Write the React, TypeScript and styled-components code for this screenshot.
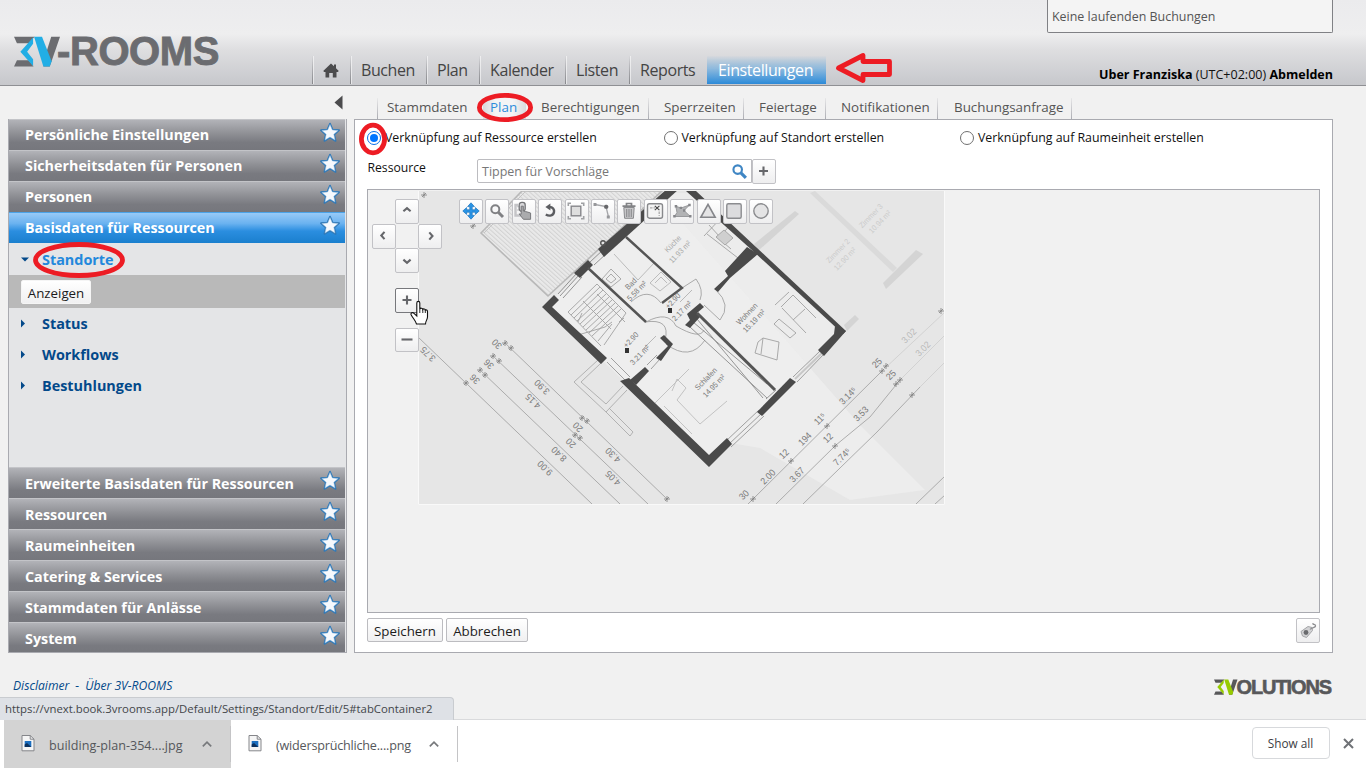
import React from "react";
import styled, { createGlobalStyle, css } from "styled-components";

const GlobalStyle = createGlobalStyle`
  * { box-sizing: border-box; }
  html, body { margin: 0; padding: 0; }
  body {
    width: 1366px; height: 768px; overflow: hidden; background: #f1f1f1;
    font-family: "Open Sans", "Noto Sans", sans-serif; font-size: 12.3px; color: #1c1c1c;
  }
  button { font-family: inherit; }
`;

const Page = styled.div`
  position: relative; width: 1366px; height: 768px; display: flex; flex-direction: column; background: #f1f1f1;
`;

/* ---------- header ---------- */
const Header = styled.header`
  height: 86px; flex: none; display: flex; align-items: stretch; border-bottom: 1px solid #8f9094;
  background: linear-gradient(#ebebed 0, #eeeeef 34px, #dedee0 50px, #cbccd0 78px, #c7c8cc 85px);
`;
const Logo = styled.div`
  width: 312px; padding: 36px 0 0 14px; display: flex; align-items: flex-start;
`;
const LogoText = styled.span`
  font-family: "Liberation Sans", sans-serif; font-weight: 700; font-size: 40px; line-height: 31px;
  letter-spacing: -0.4px; color: #6b6c70; margin-left: -4px; white-space: nowrap; -webkit-text-stroke: 0.9px #6b6c70;
`;
const Nav = styled.nav`
  display: flex; align-items: flex-end; height: 84px; flex: none;
`;
const NavItem = styled.a<{ $w: number; $active?: boolean }>`
  width: ${p => p.$w}px; height: 28px; padding: 1px 0 0 10px; display: flex; align-items: center;
  font-size: 16px; letter-spacing: -0.4px; line-height: 27px; color: #444; white-space: nowrap;
  border-left: 1px solid; border-image: linear-gradient(rgba(130,131,135,0), #85868a) 1;
  box-shadow: inset 1px 0 0 rgba(255,255,255,.55);
  ${p => p.$active && css`
    color: #fff; background: linear-gradient(rgba(200,210,220,.2), #8db9dd 45%, #3a92da 92%, #2d89d6);
    border-image: none; border-color: transparent; box-shadow: none;
  `}
`;
const HeaderRight = styled.div`
  flex: 1; padding-right: 33px; display: flex; flex-direction: column; align-items: flex-end; justify-content: space-between;
`;
const Bookings = styled.div`
  width: 286px; height: 33px; border: 1px solid #808185; border-top: 0; border-radius: 0 0 2px 2px; background: #f4f4f4;
  padding-left: 4px; line-height: 33px; color: #555; font-size: 12.45px;
`;
const UserLine = styled.div`
  color: #111; line-height: 18px; margin-bottom: 1px; white-space: nowrap; font-size: 12.52px;
  b { color: #000; font-weight: 700; }
`;

/* ---------- body ---------- */
const Body = styled.div`
  display: flex; padding: 0 33px 0 8px; height: 567px; flex: none;
`;
const Left = styled.div`
  width: 339px; margin-right: 7px; display: flex; flex-direction: column; flex: none;
`;
const Collapse = styled.div`
  height: 33px; display: flex; justify-content: flex-end; padding: 8.5px 4.5px 0 0;
`;
const Accordion = styled.div`
  height: 534px; border: 1px solid #a9aab0; border-width: 0 1px 1px; padding-right: 1px; background: #e4e5e7; overflow: hidden;
`;
const AccHead = styled.div<{ $active?: boolean; $drop?: boolean }>`
  height: 31px; display: flex; align-items: center; justify-content: space-between; padding: 0 4px 0 16px;
  color: #fff; font-weight: 700; font-size: 14.32px; line-height: 30px; white-space: nowrap;
  border-top: 1px solid ${p => (p.$active ? "#4ba3e8" : "#c3c4c8")};
  background: ${p => (p.$active
    ? "linear-gradient(#98caf7, #6ab2f0 35%, #2b8ee0 60%, #1a7fce)"
    : "linear-gradient(#b2b3b8, #8f9095 45%, #797a80 75%, #76777d)")};
  span { padding-top: ${p => (p.$drop ? 2 : 0)}px; }
  svg { margin-top: ${p => (p.$drop ? -5 : -6)}px; }
`;
const AccBody = styled.div`
  height: 224px; background: #e4e5e7;
`;
const TreeItem = styled.div<{ $active?: boolean }>`
  height: ${p => (p.$active ? 32 : 31)}px; display: flex; align-items: center; padding: ${p => (p.$active ? 1 : 0)}px 0 0 12px;
  font-weight: 700; font-size: 14.4px; color: ${p => (p.$active ? "#2288dc" : "#03498a")};
  svg { width: 9px; height: 9px; margin-right: 12px; }
`;
const SubBand = styled.div`
  height: 33px; background: #b9b9b9; display: flex; align-items: center; padding: 1px 0 0 12px;
`;
const Button = styled.button<{ $w: number; $plain?: boolean }>`
  width: ${p => p.$w}px; height: 24px; padding: 1px 0 0; border: 1px solid ${p => (p.$plain ? "#f5f5f5" : "#bcbcc0")}; border-radius: 2px;
  background: linear-gradient(#fff, #f0f0f1); color: #1c1c1c; font-size: 13.3px; line-height: 20px;
  display: flex; align-items: center; justify-content: center; white-space: nowrap;
`;

const Right = styled.div`
  width: 979px; display: flex; flex-direction: column; flex: none;
`;
const Tabs = styled.div`
  height: 33px; padding: 12px 0 0 23px; display: flex;
`;
const Tab = styled.div<{ $w: number; $pad: number; $line?: boolean; $active?: boolean }>`
  width: ${p => p.$w}px; height: 21px; padding-left: ${p => p.$pad}px; line-height: 18px; white-space: nowrap;
  font-size: 13.4px; color: ${p => (p.$active ? "#2d8cdb" : "#555")};
  border-right: 1px solid;
  border-image: ${p => (p.$line ? "linear-gradient(rgba(169,170,176,.1), #a9aab0)" : "linear-gradient(transparent, transparent)")} 1;
  ${p => p.$active && css`background: linear-gradient(90deg, #d9d9db, #f4f4f5 30%, #f4f4f5 70%, #dcdcde);`}
`;
const TabStart = styled.div`
  width: 1px; height: 21px; background: linear-gradient(rgba(169,170,176,.1), #a9aab0);
`;
const Panel = styled.div`
  height: 534px; background: #fff; border: 1px solid #a9aab0; padding: 0 12px;
`;
const Radios = styled.div`
  display: grid; grid-template-columns: 296.5px 296.5px 1fr; height: 36px; align-items: center;
`;
const RadioLabel = styled.label`
  display: flex; align-items: center; font-size: 12.35px; line-height: 16px; color: #111; white-space: nowrap; gap: 4px;
`;
const RadioText = styled.span`
  padding-bottom: 1px;
`;
const RadioDot = styled.span<{ $on?: boolean }>`
  width: 14px; height: 14px; border-radius: 50%; background: #fff; border: 1px solid ${p => (p.$on ? "#0a6fe8" : "#707070")};
  display: flex; align-items: center; justify-content: center;
  &::after { content: ""; width: 8px; height: 8px; border-radius: 50%; background: ${p => (p.$on ? "#0075ff" : "transparent")}; }
`;
const Resource = styled.div`
  display: flex; height: 33px; padding-top: 3px; align-items: flex-start;
`;
const ResourceLabel = styled.div`
  width: 110px; padding-left: .5px; line-height: 18px; color: #111; font-size: 12.2px;
`;
const Search = styled.div`
  width: 275px; height: 24px; border: 1px solid #bcbcc0; background: #fff; border-radius: 2px 0 0 2px;
  display: flex; align-items: center; justify-content: space-between; padding: 1px 3px 0 4px; color: #777; font-size: 12.5px; line-height: 22px;
`;
const IconButton = styled.button<{ $hot?: boolean }>`
  width: 24px; height: 24.5px; flex: none; padding: 0 1px 0 0; border: 1px solid ${p => (p.$hot ? "#77787c" : "#c2c2c6")}; border-radius: 2px;
  background: linear-gradient(#fff, #eeeeef); display: flex; align-items: center; justify-content: center;
  svg { display: block; flex: none; }
`;
const Canvas = styled.div`
  position: relative; height: 424px; border: 1px solid #a9aab0; background: #f1f1f1; overflow: hidden;
`;
const PlanSvg = styled.svg`
  position: absolute; left: 50px; top: 1px; display: block;
`;
const PadGrid = styled.div`
  position: absolute; left: 4px; top: 9px; display: grid; grid-template-columns: 23px 23px 24px; grid-template-rows: 25px 24px 24px;
`;
const PadHub = styled.div`
  grid-column: 2; grid-row: 2; background: #f1f1f1;
`;
const PadCell = styled.div<{ $c: number; $r: number }>`
  grid-column: ${p => p.$c}; grid-row: ${p => p.$r};
`;
const ZoomButtons = styled.div`
  position: absolute; left: 27px; top: 98px; display: flex; flex-direction: column; gap: 15px;
`;
const Toolbar = styled.div`
  position: absolute; left: 91px; top: 9px; display: flex; gap: 2.4px;
`;
const Actions = styled.div`
  display: flex; gap: 3px; padding-top: 5px;
`;
const Spacer = styled.div`flex: 1;`;

/* ---------- footer ---------- */
const Footer = styled.footer`
  height: 66px; flex: none; display: flex; justify-content: space-between; align-items: flex-start; padding: 24px 35px 0 13px;
`;
const FooterLinks = styled.div`
  font-style: italic; font-size: 12.15px; line-height: 18px; color: #04498a; display: flex; gap: 6px; white-space: nowrap;
`;
const Volutions = styled.div`
  display: flex; align-items: flex-start; padding-top: 2px;
  span {
    font-family: "Liberation Sans", sans-serif; font-weight: 700; font-size: 20px; line-height: 17px; letter-spacing: -1.1px;
    color: #58585a; margin: 0 0 0 -2px; -webkit-text-stroke: 0.6px #58585a;
  }
`;
const StatusBar = styled.div`
  position: absolute; left: 0; top: 697px; width: 454px; height: 23px; background: #dee1e6; border: 1px solid #c9ccd0; border-left: 0; border-bottom: 0;
  border-top-right-radius: 4px; padding-left: 5px; font-size: 11.36px; line-height: 22px; color: #43464a; white-space: nowrap;
`;
const Downloads = styled.div`
  height: 49px; flex: none; background: #fff; border-top: 1px solid #d9dadc; display: flex; align-items: flex-start; padding-left: 4px;
`;
const Download = styled.div<{ $hot?: boolean }>`
  width: 227px; height: 48px; display: flex; align-items: center; padding: 0 18px 0 17px; background: ${p => (p.$hot ? "#d3d3d3" : "#fff")};
  position: relative; color: #55575b; white-space: nowrap;
  &::after { content: ""; position: absolute; right: 0; top: 6px; width: 1px; height: 36px; background: #c4c4c6; }
`;
const FileName = styled.span<{ $track?: number }>`
  flex: 1; margin-left: 14px; padding-top: 2px; font-size: 12.6px; letter-spacing: ${p => p.$track ?? 0}px;
`;
const ShowAll = styled.button`
  width: 78px; height: 32px; margin: 7px 13px 0 0; border: 1px solid #d7d9dc; border-radius: 4px; background: #fff;
  font-size: 11.8px; font-weight: 500; color: #3c4043; padding: 0 0 1px;
`;
const CloseIcon = styled.svg`
  margin: 17.5px 12.5px 0 0;
`;
const Overlay = styled.svg`
  position: absolute; left: 0; top: 0; pointer-events: none;
`;

const LogoMark = ({ w, h, dark, bright }: { w: number; h: number; dark: string; bright: string }) => (
  <svg width={w} height={h} viewBox="0 0 48 30" preserveAspectRatio="none">
    <path d="M0 .8H21L15 7H3ZM0 29.5 3 23.5H15L20 29.5Z" fill={dark} />
    <path d="M38 .8H47L36.5 29.5H30L33 16Z" fill={dark} />
    <path d="M19.5 1.5V7.6L13.4 15.2 19.5 22.5V29L6.5 15.2Z" fill={bright} />
    <path d="M20.5 .8H28.6L38.4 24.5 36.5 29.5H30Z" fill={bright} />
  </svg>
);

const STAR = "M11 1.6 13.6 7.6 20.1 8.2 15.2 12.5 16.6 18.9 11 15.5 5.4 18.9 6.8 12.5 1.9 8.2 8.4 7.6Z";
const Star = () => (
  <svg width="22" height="21" viewBox="0 0 22 21">
    <path d={STAR} fill="#2f78b7" stroke="#2f78b7" strokeWidth="1.7" strokeLinejoin="round" />
    <path d={STAR} fill="#f6f9fd" stroke="#8fbbe0" strokeWidth=".5" transform="translate(1.1 1.1) scale(.9)" />
  </svg>
);

const Head = ({ label, active, drop }: { label: string; active?: boolean; drop?: boolean }) => (
  <AccHead $active={active} $drop={drop}><span>{label}</span><Star /></AccHead>
);

const Chevron = ({ d }: { d: string }) => (
  <svg width="12" height="12" viewBox="0 0 12 12"><path d={d} fill="none" stroke="#66676b" strokeWidth="2.1" /></svg>
);
const Magnifier = ({ c, size }: { c: string; size: number }) => (
  <svg width={size} height={size} viewBox="0 0 16 16" fill="none" stroke={c}>
    <circle cx="6.3" cy="6.2" r="4" strokeWidth="2" /><path d="M9.3 9.3 14 14" strokeWidth="3" />
  </svg>
);

const icons: React.ReactNode[] = [
  <svg width="18" height="18" viewBox="0 0 18 18" key="move"><path d="M9 .8 12.4 4.6H10.2V7.8H13.4V5.6L17.2 9 13.4 12.4V10.2H10.2V13.4H12.4L9 17.2 5.6 13.4H7.8V10.2H4.6V12.4L.8 9 4.6 5.6V7.8H7.8V4.6H5.6Z" fill="#2994e6" stroke="#1b74bd" strokeWidth=".7" /></svg>,
  <Magnifier c="#808184" size={16} key="zoom" />,
  <svg width="20" height="20" viewBox="0 0 20 20" key="pick"><path d="M5 4H2.5V14.5H8" fill="none" stroke="#c4c4c7" strokeWidth="2.4" /><path d="M4 5.5H7M4 9H8" stroke="#cfcfd1" strokeWidth="1.6" /><rect x="6.2" y="1.3" width="6" height="9" rx="2.6" fill="#d8d8da" stroke="#737477" strokeWidth="1.3" /><path d="M8.2 5.2H10.3V10L12.6 10.6 15 11.2 17.6 12V18.3H10.4L6.2 12.9 8.2 13.2Z" fill="#aaabad" stroke="#77787b" /></svg>,
  <svg width="16" height="16" viewBox="0 0 16 16" key="turn"><path d="M7.5 4C10.8 4 12.4 6.4 12 9 11.5 12.3 7.6 13.8 3.8 11.4" fill="none" stroke="#5c5d61" strokeWidth="2.4" /><path d="M8.4 .6V7.4L3.4 4Z" fill="#5c5d61" /></svg>,
  <svg width="18" height="18" viewBox="0 0 18 18" key="fit"><rect x="4.2" y="4.2" width="9.6" height="9.6" fill="#dedede" stroke="#85868a" strokeWidth="1.4" /><path d="M1.3 4V1.3H4M14 1.3H16.7V4M16.7 14V16.7H14M4 16.7H1.3V14" fill="none" stroke="#a0a1a4" strokeWidth="1.6" /></svg>,
  <svg width="18" height="18" viewBox="0 0 18 18" key="line"><path d="M2 2.5 13 4.5 15.5 15" fill="none" stroke="#a5a6a9" strokeWidth="1.3" /><rect x=".5" y="1" width="3" height="3" fill="#97989b" /><rect x="11.2" y="2.8" width="4" height="4" rx="1.5" fill="#66676a" /><rect x="13.8" y="13.5" width="3" height="3" fill="#97989b" /></svg>,
  <svg width="16" height="18" viewBox="0 0 16 18" key="trash"><path d="M2.8 5.5H13.2L12.4 16.3H3.6Z" fill="#c6c6c8" stroke="#8a8b8e" /><path d="M5.7 7V15M8 7V15M10.3 7V15" stroke="#8a8b8e" strokeWidth="1.1" /><path d="M1.5 4.2H14.5M5.5 3.5V1.5H10.5V3.5" fill="none" stroke="#828386" strokeWidth="1.7" /></svg>,
  <svg width="18" height="18" viewBox="0 0 18 18" key="node"><rect x="1.5" y="1.8" width="15" height="14.4" rx="2" fill="#f4f4f4" stroke="#88898c" strokeWidth="1.4" /><path d="M4 5.8H9M13.2 9.5V14" stroke="#aaa" strokeWidth="1.3" strokeDasharray="2.5 1" /><path d="M8.8 3.8 13.4 8.2M13.4 3.8 8.8 8.2" stroke="#444" strokeWidth="1.1" /></svg>,
  <svg width="20" height="18" viewBox="0 0 20 18" key="poly"><path d="M2.5 14.5 5 10.5 3.8 4.3 9 6 17.5 3 12 8.5 18.3 14.5Z" fill="#b2b3b5" stroke="#98999c" /><path d="M1.2 13H3.7V15.5H1.2ZM2.7 3H5.2V5.5H2.7ZM7.7 4.7H10V7H7.7ZM16.2 1.7H18.7V4.2H16.2ZM17 13H19.5V15.5H17ZM11 7.3H13.4V9.7H11Z" fill="#85868a" /></svg>,
  <svg width="18" height="18" viewBox="0 0 18 18" key="tri"><path d="M9 2.3 16.2 15.3H1.8Z" fill="#e4e4e5" stroke="#85868a" strokeWidth="1.6" /></svg>,
  <svg width="18" height="18" viewBox="0 0 18 18" key="sq"><rect x="1.8" y="1.8" width="14.4" height="14.4" rx="1.5" fill="#dcdcde" stroke="#8b8c8f" strokeWidth="1.4" /></svg>,
  <svg width="18" height="18" viewBox="0 0 18 18" key="circ"><circle cx="9" cy="9" r="7.2" fill="#e4e4e5" stroke="#8b8c8f" strokeWidth="1.4" /></svg>,
];

type Note = [number, number, string, number?];
const leftDims: Note[] = [[428, 354, "3.75"], [497, 344, "30"], [489, 364, "36"], [475, 379, "36"], [542, 387, "3.90"], [533, 401, "4.15"], [578, 427, "20"], [571, 443, "20"], [613, 455, "4.30"], [613, 478, "4.05"], [559, 454, "8.40"], [545, 468, "9.00"]];
const rightDims: Note[] = [[744, 495, "30"], [768, 477, "2.00"], [784, 454, "12"], [805, 439, "194"], [797, 475, "3.67"], [828, 438, "12"], [820, 419, "11⁵"], [842, 457, "7.74⁵"], [848, 396, "3.14⁵"], [861, 414, "3.53"], [877, 363, "25"], [891, 375, "25"], [909, 336, "3.02", 0.4], [923, 349, "3.02", 0.4]];
const rooms: Note[] = [[673, 244, "Küche", 0.6], [680, 252, "11.93 m²", 0.6], [631, 284, "Bad"], [637, 291, "5.58 m²"], [747, 314, "Wohnen"], [754, 321, "15.19 m²"], [706, 379, "Schlafen"], [714, 386, "14.95 m²"], [673, 301, "+2.90"], [682, 311, "2.17 m²"], [631, 340, "+2.90"], [640, 355, "3.21 m²"], [871, 216, "Zimmer 3", 0.25], [880, 222, "10.94 m²", 0.25], [838, 251, "Zimmer 2", 0.25], [845, 259, "12.90 m²", 0.25]];
const ticks = [[505, 343], [511, 348], [493, 356], [499, 361], [480, 370], [485, 375], [466, 383], [582, 418], [587, 421], [575, 435], [580, 438], [667, 499], [753, 499], [791, 461], [827, 426], [835, 446], [882, 371], [886, 366], [896, 384], [900, 380], [912, 395], [424, 195], [473, 226], [941, 311]];

const Plan = () => (
  <PlanSvg width="527" height="314" viewBox="418 191 527 314">
    <defs>
      <pattern id="deck" width="3.2" height="3.2" patternUnits="userSpaceOnUse" patternTransform="rotate(-48)">
        <rect width="3.2" height="3.2" fill="#e9e9e9" /><rect width="1" height="3.2" fill="#d2d2d2" />
      </pattern>
    </defs>
    <rect x="418" y="191" width="527" height="314" fill="#e6e6e6" />
    <path d="M481 233 522 191H662L548 296Z" fill="url(#deck)" stroke="#b8b8b8" strokeWidth="1.6" />
    <path d="M484 233 526 191" stroke="#c4c4c4" />
    <path d="M545 306 672 193H690L841 330 709 462Z" fill="#ececec" />
    <path d="M548 306 662 200 770 322 860 425 925 490 850 500 760 448 730 443 709 460Z" fill="#efefef" opacity=".7" />
    <g fill="none" stroke="#b4b4b4" strokeWidth=".9">
      <path d="M418 337 592 504M480 370 620 504M493 356 648 504M505 343 667 499" stroke="#a5a5a5" />
      <path d="M748 504 882 371M776 504 836 445 870 417 900 380M803 504 877 432 920 387M916 504 945 476M935 504 945 495" stroke="#a5a5a5" />
      <path d="M882 371 945 312M900 380 945 335M920 387 945 362" stroke="#cfcfcf" />
      <path d="M598 360 574 382 606 412 627 390M601 363 581 382 606 404 623 386M606 412 630 436 633 432 609 408" stroke="#ababab" />
    </g>
    <g fill="none" stroke="#a2a2a2" strokeWidth=".9">
      <path d="M568 312 597 284 626 313 604 345M574 318 603 290M580 324 609 297M586 330 615 303M592 336 621 309M571 315 600 287M577 321 606 294M583 327 612 300M589 333 618 306M598 341 612 324" />
      <path d="M568 312 601 346M583 301 611 329M597 294 625 322M578 335 605 327 612 322M578 322 582 313M619 322 624 318" />
      <path d="M558 294 577 273M563 298 582 277M560 296 579 275M590 262 604 249M594 265 607 253" stroke="#888" />
      <path d="M602 279 611 269 621 279 611 287ZM606 279 611 274 616 279 611 283Z" />
      <path d="M614 254 638 280 655 262M650 283 661 272 671 282 660 291ZM655 283 661 277 667 283" stroke="#b5b5b5" />
      <path d="M661 303Q648 286 631 302M646 322Q668 310 676 326M665 340Q671 318 645 322M676 326Q700 340 704 330M682 288 696 279Q704 290 700 300M716 290Q732 305 720 320L704 305M666 344Q690 362 705 340" />
      <path d="M690 327 767 398M693 322 767 384M697 319 763 398M766 399 776 390" stroke="#8c8c8c" />
      <path d="M781 307 793 295 816 318M782 308 806 333M793 320 805 309M774 324 779 319 796 333 790 338ZM758 342 763 338 779 342 777 360 755 353ZM763 338 761 354M789 292 775 305" />
      <path d="M655 403 689 369M672 391 677 379 686 388 677 400M677 400 700 424 727 401M664 406 692 434" stroke="#bdbdbd" />
      <path d="M704 236 722 217M707 234 738 258M724 243 731 249M709 225 720 237 730 225" />
      <path d="M716 237 724 230 733 238 725 245Z" fill="#cfcfcf" />
    </g>
    <g fill="none" stroke="#969696" strokeWidth=".9">
      <path d="M726 441 759 410M729 444 762 413M731 447 764 416M793 377 820 351M797 382 824 354M607 362 626 381M611 358 630 377M647 365 657 355M651 369 660 359" />
      <path d="M795 379 822 353" stroke="#c8c8c8" strokeWidth="2" />
    </g>
    <g fill="#d4d4d4">
      <path d="M810 193 815 191 897 268 893 272Z" fill="#dadada" />
      <path d="M754 244 795 211 799 214 758 251Z" />
      <path d="M883 283 916 250 923 254 886 289Z" />
      <path d="M844 325 855 315 859 319 847 331Z" />
    </g>
    <g fill="#4a4a4a">
      <path d="M542 307 554 295 559 300 552 307 607 358 601 364Z" />
      <path d="M574 273 588 260 593 265 580 278Z" />
      <path d="M598 249 667 189H679L604 257Z" />
      <path d="M686 191H696L846 331 843 334 753 251Z" />
      <path d="M846 331 824 356 818 350 834 334 835 326Z" />
      <path d="M747 247 758 254 730 278 718 292 714 289 728 276 725 271Z" />
      <path d="M620 381 629 378 709 455 727 438 732 444 709 467Z" />
      <path d="M630 380 645 367 649 371 636 385Z" />
      <path d="M656 358 668 346 660 338 664 335 673 344 661 361Z" />
      <path d="M757 412 790 378 796 382 762 416Z" />
      <path d="M685 325 690 320 687 314 700 303 704 307 697 313 700 317 690 328Z" />
    </g>
    <g fill="none" stroke="#555" strokeWidth="2.4">
      <path d="M626 237 682 288 662 303M588 268 646 322" />
      <path d="M697 313 775 390" strokeWidth="3" />
    </g>
    <circle cx="603" cy="243" r="2.3" fill="none" stroke="#555" strokeWidth="1.4" />
    <path d="M668 308H672V313H668ZM625 348H629V353H625Z" fill="#333" />
    <path d="M680 302 692 290M642 350 656 336" stroke="#aaa" strokeWidth=".8" />
    <g stroke="#7d7d7d" strokeWidth=".8">
      {ticks.map(([x, y], i) => <path key={i} d={`M${x - 3} ${y}h6M${x} ${y - 3}v6M${x - 2} ${y + 2}l4-4`} />)}
    </g>
    <g fontFamily="Liberation Sans, sans-serif" fontSize="9.4" fill="#7a7a7a" textAnchor="middle">
      {leftDims.map(([x, y, t], i) => <text key={i} transform={`translate(${x} ${y}) rotate(224) scale(.92 1)`} dy="3">{t}</text>)}
      {rightDims.map(([x, y, t, o], i) => <text key={i} transform={`translate(${x} ${y}) rotate(-45) scale(.92 1)`} dy="3" opacity={o ?? 1}>{t}</text>)}
    </g>
    <g fontFamily="Liberation Sans, sans-serif" fontSize="7.8" fill="#7a7a7a" textAnchor="middle">
      {rooms.map(([x, y, t, o], i) => <text key={i} transform={`translate(${x} ${y}) rotate(-46) scale(.92 1)`} dy="2.5" opacity={o ?? 1}>{t}</text>)}
    </g>
    <path d="M418.5 191V504.5H944.5V191" fill="none" stroke="#f9f9f9" />
  </PlanSvg>
);

const Annotations = () => (
  <Overlay width="1366" height="768" viewBox="0 0 1366 768">
    <g fill="none" stroke="#ed1c24" strokeWidth="4.8">
      <ellipse cx="505" cy="107.5" rx="25.6" ry="12.2" />
      <ellipse cx="373" cy="139" rx="11.6" ry="13.8" />
      <ellipse cx="79" cy="260" rx="43.5" ry="15.5" />
      <path d="M838.5 68 863 55.5V61.5H889.5V74.5H863V80.5Z" strokeLinejoin="round" />
    </g>
    <path d="M416.8 303C416.8 300.8 419.8 300.8 419.8 303V309C420.2 307.8 422.6 307.9 422.8 309.4 423.4 308.4 425.2 308.9 425.3 310 426.2 309.5 427.5 310.2 427.5 311.5V317C427.3 320 425.5 321 425.5 324H416.5C415.5 320.5 413 318.5 411 314.5 410.6 313 412.5 312 414 313.3L416.8 316Z" fill="#fff" stroke="#111" strokeWidth="1.1" />
    <path d="M419.8 309V313M422.8 309.5V313M425.3 310V313" stroke="#111" strokeWidth=".9" />
  </Overlay>
);

const FileIcon = () => (
  <svg width="14" height="18" viewBox="0 0 14 18">
    <path d="M1 .5H9.2L13 4.2V15.8H1Z" fill="#f5f5f5" stroke="#85868a" /><path d="M9.2 .5V4.2H13" fill="none" stroke="#85868a" />
    <rect x="3.7" y="6" width="6.6" height="6" fill="#1c6fc0" /><path d="M3.7 12V9.5L6 8 10.3 12Z" fill="#0b315e" />
  </svg>
);
const Up = () => <svg width="12" height="8" viewBox="0 0 12 8"><path d="M1.8 6.3 6 2.2 10.2 6.3" fill="none" stroke="#77797c" strokeWidth="1.7" /></svg>;

export default function App() {
  return (
    <Page>
      <GlobalStyle />
      <Header>
        <Logo><LogoMark w={47} h={31} dark="#6b6c70" bright="#22aee5" /><LogoText>-ROOMS</LogoText></Logo>
        <Nav>
          <NavItem $w={38}>
            <svg width="16" height="15" viewBox="0 0 16 15"><path d="M8 .5 11 3.3V1.5H13V5.2L15.8 8 14.8 9H13.5V14.5H9.8V10H6.2V14.5H2.5V9H1.2L.2 8Z" fill="#4b4b4d" /></svg>
          </NavItem>
          <NavItem $w={76}>Buchen</NavItem>
          <NavItem $w={53}>Plan</NavItem>
          <NavItem $w={86}>Kalender</NavItem>
          <NavItem $w={64}>Listen</NavItem>
          <NavItem $w={78}>Reports</NavItem>
          <NavItem $w={119} $active>Einstellungen</NavItem>
        </Nav>
        <HeaderRight>
          <Bookings>Keine laufenden Buchungen</Bookings>
          <UserLine><b>Uber Franziska</b> (UTC+02:00) <b>Abmelden</b></UserLine>
        </HeaderRight>
      </Header>

      <Body>
        <Left>
          <Collapse><svg width="9" height="15" viewBox="0 0 9 15"><path d="M8.5 .5V14.5L.5 7.5Z" fill="#4b4b4d" /></svg></Collapse>
          <Accordion>
            <Head label="Persönliche Einstellungen" />
            <Head label="Sicherheitsdaten für Personen" />
            <Head label="Personen" />
            <Head label="Basisdaten für Ressourcen" active />
            <AccBody>
              <TreeItem $active><svg viewBox="0 0 9 9"><path d="M0 2.5H8L4 6.5Z" fill="#03498a" /></svg>Standorte</TreeItem>
              <SubBand><Button $w={70} $plain>Anzeigen</Button></SubBand>
              {["Status", "Workflows", "Bestuhlungen"].map(t => (
                <TreeItem key={t}><svg viewBox="0 0 9 9"><path d="M0 .5V8.5L4 4.5Z" fill="#03498a" /></svg>{t}</TreeItem>
              ))}
            </AccBody>
            {["Erweiterte Basisdaten für Ressourcen", "Ressourcen", "Raumeinheiten", "Catering & Services", "Stammdaten für Anlässe", "System"].map(t => <Head key={t} label={t} drop />)}
          </Accordion>
        </Left>

        <Right>
          <Tabs>
            <TabStart />
            <Tab $w={105} $pad={9}>Stammdaten</Tab>
            <Tab $w={43} $pad={7} $active>Plan</Tab>
            <Tab $w={123} $pad={15} $line>Berechtigungen</Tab>
            <Tab $w={95} $pad={15} $line>Sperrzeiten</Tab>
            <Tab $w={82} $pad={15} $line>Feiertage</Tab>
            <Tab $w={112} $pad={15} $line>Notifikationen</Tab>
            <Tab $w={134} $pad={16} $line>Buchungsanfrage</Tab>
          </Tabs>
          <Panel>
            <Radios>
              <RadioLabel><RadioDot $on /><RadioText>Verknüpfung auf Ressource erstellen</RadioText></RadioLabel>
              <RadioLabel><RadioDot /><RadioText>Verknüpfung auf Standort erstellen</RadioText></RadioLabel>
              <RadioLabel><RadioDot /><RadioText>Verknüpfung auf Raumeinheit erstellen</RadioText></RadioLabel>
            </Radios>
            <Resource>
              <ResourceLabel>Ressource</ResourceLabel>
              <Search>Tippen für Vorschläge<Magnifier c="#3f86c4" size={17} /></Search>
              <IconButton><Chevron d="M5.5 1.5V10.5M1 6H10" /></IconButton>
            </Resource>
            <Canvas>
              <Plan />
              <PadGrid>
                <PadHub />
                <PadCell $c={2} $r={1}><IconButton><Chevron d="M2.4 6.3 6 3.1 9.6 6.3" /></IconButton></PadCell>
                <PadCell $c={1} $r={2}><IconButton><Chevron d="M6.5 1.9 3.3 5.5 6.5 9.1" /></IconButton></PadCell>
                <PadCell $c={3} $r={2}><IconButton><Chevron d="M5.3 2.4 8.5 6 5.3 9.6" /></IconButton></PadCell>
                <PadCell $c={2} $r={3}><IconButton><Chevron d="M2.4 5.6 6 8.8 9.6 5.6" /></IconButton></PadCell>
              </PadGrid>
              <ZoomButtons>
                <IconButton $hot><Chevron d="M6 1.5V10.5M1.5 6H10.5" /></IconButton>
                <IconButton><Chevron d="M.5 5.5H11.5" /></IconButton>
              </ZoomButtons>
              <Toolbar>{icons.map((icon, i) => <IconButton key={i}>{icon}</IconButton>)}</Toolbar>
            </Canvas>
            <Actions>
              <Button $w={76}>Speichern</Button>
              <Button $w={82}>Abbrechen</Button>
              <Spacer />
              <IconButton>
                <svg width="18" height="18" viewBox="0 0 18 18"><path d="M2 10.5 9 5.5 13 6.5 13.5 9.5 7.5 16.5 3.5 15Z" fill="#d2d2d4" stroke="#a4a5a8" /><circle cx="7" cy="11.5" r="2.4" fill="#6a6b6e" /><path d="M11 8.5C13 6 17 7 16.5 4.5 16 2.5 13.5 4.5 14 2" fill="none" stroke="#8e8f92" strokeWidth="1.2" /></svg>
              </IconButton>
            </Actions>
          </Panel>
        </Right>
      </Body>

      <Footer>
        <FooterLinks><span>Disclaimer</span><span>-</span><span>Über 3V-ROOMS</span></FooterLinks>
        <Volutions><LogoMark w={24} h={16} dark="#58585a" bright="#97cb00" /><span>OLUTIONS</span></Volutions>
      </Footer>
      <Downloads>
        <Download $hot><FileIcon /><FileName>building-plan-354....jpg</FileName><Up /></Download>
        <Download><FileIcon /><FileName $track={-0.2}>(widersprüchliche....png</FileName><Up /></Download>
        <Spacer />
        <ShowAll>Show all</ShowAll>
        <CloseIcon width="11" height="11" viewBox="0 0 11 11"><path d="M1 1 10 10M10 1 1 10" stroke="#6f7276" strokeWidth="2" /></CloseIcon>
      </Downloads>
      <StatusBar>https://vnext.book.3vrooms.app/Default/Settings/Standort/Edit/5#tabContainer2</StatusBar>
      <Annotations />
    </Page>
  );
}
